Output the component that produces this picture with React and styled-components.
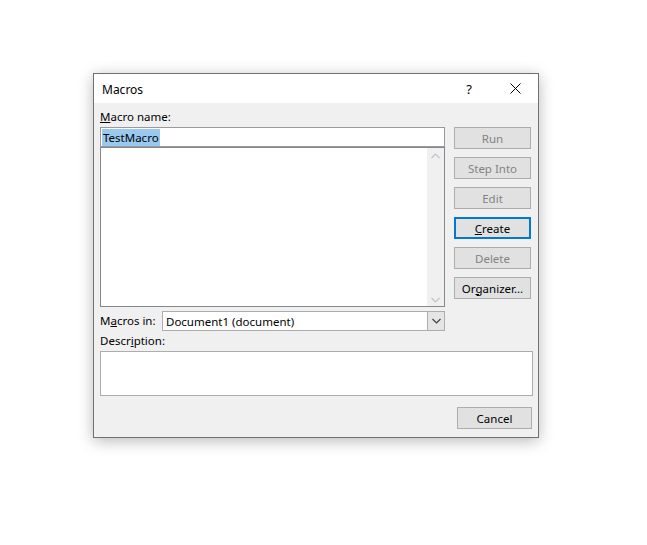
import React from 'react';
import styled, { createGlobalStyle } from 'styled-components';

const GlobalStyle = createGlobalStyle`
  body {
    margin: 0;
    background: #ffffff;
    font-family: "Noto Sans", "Open Sans", sans-serif;
    font-size: 11.5px;
    color: #000;
  }
`;

const Page = styled.div`
  width: 647px;
  height: 545px;
  padding: 73px 0 0 93px;
  box-sizing: border-box;
`;

const Dialog = styled.div`
  width: 446px;
  height: 365px;
  box-sizing: border-box;
  border: 1px solid #707070;
  background: #f0f0f0;
  box-shadow: 0 3px 14px rgba(0, 0, 0, 0.28);
  display: flex;
  flex-direction: column;
`;

const TitleBar = styled.div`
  height: 29px;
  background: #fff;
  display: flex;
  align-items: center;
  padding-left: 8px;
`;

const Title = styled.div`
  flex: 1;
  font-size: 12px;
  padding-top: 2px;
`;

const TitleButton = styled.div`
  width: ${p => p.$w || 44}px;
  height: 29px;
  display: flex;
  align-items: center;
  justify-content: center;
  font-size: 13px;
`;

const Body = styled.div`
  flex: 1;
  padding: 0 5px 7px 6px;
  display: flex;
  flex-direction: column;
`;

const Main = styled.div`
  display: grid;
  grid-template-columns: 345px 1fr;
  column-gap: 9px;
`;

const LeftCol = styled.div`
  display: flex;
  flex-direction: column;
`;

const Label = styled.div`
  line-height: 16px;
  width: ${p => (p.$w ? `${p.$w}px` : 'auto')};
  flex-shrink: 0;
  padding-top: ${p => p.$top || 0}px;
  margin-bottom: ${p => p.$bottom || 0}px;
  white-space: nowrap;
`;

const NameInput = styled.div`
  height: 20px;
  box-sizing: border-box;
  border: 1px solid #9a9a9a;
  background: #fff;
  display: flex;
  align-items: center;
  padding-left: 1px;
`;

const Selected = styled.span`
  background: #99c9ef;
  line-height: 17px;
  padding: 0 1px;
`;

const ListBox = styled.div`
  height: 160px;
  width: 345px;
  box-sizing: border-box;
  border: 1px solid #828790;
  background: #fff;
  display: flex;
  justify-content: flex-end;
`;

const ScrollTrack = styled.div`
  width: 17px;
  background: #f0f0f0;
  display: flex;
  flex-direction: column;
  justify-content: space-between;
  align-items: center;
  padding: 5px 0 3px;
`;

const ComboRow = styled.div`
  display: flex;
  align-items: center;
  margin-top: 4px;
`;

const Combo = styled.div`
  flex: 1;
  height: 20px;
  box-sizing: border-box;
  border: 1px solid #adadad;
  background: #fff;
  display: flex;
  align-items: stretch;
`;

const ComboText = styled.div`
  flex: 1;
  padding-left: 3px;
  display: flex;
  align-items: center;
`;

const ComboButton = styled.div`
  width: 16px;
  border-left: 1px solid #adadad;
  background: #e5e5e5;
  display: flex;
  align-items: center;
  justify-content: center;
`;

const ButtonCol = styled.div`
  padding-top: 24px;
  display: flex;
  flex-direction: column;
  gap: 8px;
`;

const Button = styled.div`
  width: ${p => p.$w || 77}px;
  height: 22px;
  box-sizing: border-box;
  border: ${p => (p.$focus ? '2px solid #0078d7' : '1px solid #adadad')};
  background: #e1e1e1;
  color: ${p => (p.$disabled ? '#838383' : '#000')};
  display: flex;
  align-items: center;
  justify-content: center;
  white-space: nowrap;
`;

const DescBox = styled.div`
  height: 45px;
  box-sizing: border-box;
  border: 1px solid #adadad;
  background: #fff;
`;

const Footer = styled.div`
  display: flex;
  justify-content: flex-end;
  margin-top: 11px;
  padding-right: 1px;
`;

const Chevron = ({ up, color = '#c2c2c2' }) => (
  <svg width="9" height="6" viewBox="0 0 9 6">
    <path
      d={up ? 'M0.5 5 L4.5 1 L8.5 5' : 'M0.5 1 L4.5 5 L8.5 1'}
      fill="none"
      stroke={color}
      strokeWidth="1.2"
    />
  </svg>
);

const App = () => (
  <>
    <GlobalStyle />
    <Page>
      <Dialog>
        <TitleBar>
          <Title>Macros</Title>
          <TitleButton $w={46}>?</TitleButton>
          <TitleButton $w={46}>
            <svg width="11" height="11" viewBox="0 0 11 11">
              <path d="M0.5 0.5 L10.5 10.5 M10.5 0.5 L0.5 10.5" stroke="#000" strokeWidth="1" />
            </svg>
          </TitleButton>
        </TitleBar>
        <Body>
          <Main>
            <LeftCol>
              <Label $top={6} $bottom={2}>
                <u>M</u>acro name:
              </Label>
              <NameInput>
                <Selected>TestMacro</Selected>
              </NameInput>
              <ListBox>
                <ScrollTrack>
                  <Chevron up />
                  <Chevron />
                </ScrollTrack>
              </ListBox>
              <ComboRow>
                <Label $w={62}>
                  M<u>a</u>cros in:
                </Label>
                <Combo>
                  <ComboText>Document1 (document)</ComboText>
                  <ComboButton>
                    <Chevron color="#404040" />
                  </ComboButton>
                </Combo>
              </ComboRow>
            </LeftCol>
            <ButtonCol>
              <Button $disabled>Run</Button>
              <Button $disabled>Step Into</Button>
              <Button $disabled>Edit</Button>
              <Button $focus>
                <u>C</u>reate
              </Button>
              <Button $disabled>Delete</Button>
              <Button>
                Or<u>g</u>anizer...
              </Button>
            </ButtonCol>
          </Main>
          <Label $top={2} $bottom={2}>
            Descr<u>i</u>ption:
          </Label>
          <DescBox />
          <Footer>
            <Button $w={75}>Cancel</Button>
          </Footer>
        </Body>
      </Dialog>
    </Page>
  </>
);

export default App;
